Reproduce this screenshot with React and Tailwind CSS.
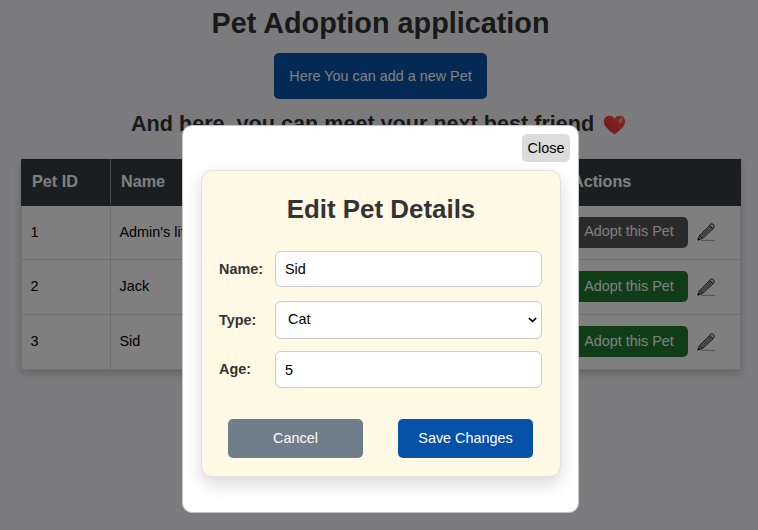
const pets = [
  { id: 1, name: "Admin's little dog", type: "Dog", age: 3, adopted: true },
  { id: 2, name: "Jack", type: "Dog", age: 2, adopted: false },
  { id: 3, name: "Sid", type: "Cat", age: 5, adopted: false },
];

function Heart() {
  return (
    <svg viewBox="0 0 24 21" className="mt-[2px] h-[20px] w-[23px]">
      <defs>
        <linearGradient id="heart" x1="0" y1="0.7" x2="0.8" y2="0.2">
          <stop offset="0" stopColor="#b0124a" />
          <stop offset="0.3" stopColor="#f03a3c" />
          <stop offset="1" stopColor="#ff4a42" />
        </linearGradient>
      </defs>
      <path
        d="M12 20.5C8 17 .8 12.6 .8 6.8 .8 3 3.5 .7 6.6 .7 9 .7 11 1.9 12 3.9 13 1.9 15 .7 17.4 .7 20.5 .7 23.2 3 23.2 6.8 23.2 12.6 16 17 12 20.5Z"
        fill="url(#heart)"
      />
      <ellipse cx="18.5" cy="5.6" rx="1.9" ry="3" transform="rotate(35 18.5 5.6)" fill="#ff9a80" />
    </svg>
  );
}

function Pencil() {
  return (
    <svg viewBox="0 0 18 18" className="h-[18px] w-[18px]" fill="none">
      <path d="M2.2 12.8 12.4 2.6 16 5.8 5.8 15.4Z" fill="#999" stroke="#444" strokeWidth="1" />
      <path d="M4 14.1 14.2 4.2" stroke="#666" strokeWidth="0.8" />
      <path d="M12.4 2.6C13.2 .6 15.2 .3 16.4 1.4 17.6 2.6 17.4 4.7 16 5.8Z" fill="#ccc" stroke="#333" strokeWidth="1" />
      <path d="M2.2 12.8 1 16.8 5.8 15.4Z" fill="#aaa" stroke="#444" strokeWidth="0.9" />
      <path d="M1.5 15.2 .8 17.2 2.8 16.5Z" fill="#000" stroke="#000" strokeWidth="0.8" />
      <path d="M4 17.4H17.5" stroke="#888" strokeWidth="0.8" />
    </svg>
  );
}

function PetTable() {
  const th = "border border-[#343c42] not-first:border-l-[#8b9196] px-[10px] pb-[2px] text-left text-[16.2px] font-bold";
  const td = "border border-[#dedede] px-[8.5px]";
  return (
    <table className="mt-[22px] ml-[21px] h-[211px] w-[720px] table-fixed border-collapse bg-white text-[14.4px] shadow-[0_4px_8px_rgba(0,0,0,0.18)]">
      <colgroup>
        <col className="w-[89px]" />
        <col className="w-[180px]" />
        <col className="w-[140px]" />
        <col className="w-[131px]" />
        <col />
      </colgroup>
      <thead>
        <tr className="h-[46px] bg-[#343c42] text-white">
          <th className={`${th} border-r-[#8b9196]`}>Pet ID</th>
          <th className={th}>Name</th>
          <th className={th}>Type</th>
          <th className={th}>Age</th>
          <th className={th}>Actions</th>
        </tr>
      </thead>
      <tbody>
        {pets.map((pet, i) => (
          <tr key={pet.id} className={i === 0 ? "h-[54px]" : "h-[55px]"}>
            <td className={td}>{pet.id}</td>
            <td className={td}>{pet.name}</td>
            <td className={td}>{pet.type}</td>
            <td className={td}>{pet.age}</td>
            <td className={td}>
              <div className="-mt-px flex items-center gap-[9px]">
                <button
                  className={`h-[31px] w-[117px] rounded-[5px] text-white ${pet.adopted ? "bg-[#555]" : "bg-[#1e7a31]"}`}
                >
                  Adopt this Pet
                </button>
                <Pencil />
              </div>
            </td>
          </tr>
        ))}
      </tbody>
    </table>
  );
}

function EditForm() {
  const label = "w-[56px] pt-px text-[14.4px] font-bold text-[#333]";
  const field = "w-[267px] rounded-[6px] border border-[#ccc] bg-white text-[14.4px] text-black";
  return (
    <form className="mx-[18px] mt-[8px] h-[307px] w-[360px] rounded-[11px] border border-[#e2e2e0] bg-[#fff9e6] px-[17px] pt-[20px] shadow-[0_7px_18px_rgba(0,0,0,0.15)]">
      <h2 className="h-[60px] text-center text-[25.9px] leading-[36px] font-bold text-[#333]">Edit Pet Details</h2>
      <div className="flex h-[36px] items-center">
        <label className={label}>Name:</label>
        <input className={`${field} h-[36px] px-[9px]`} defaultValue="Sid" />
      </div>
      <div className="mt-[14px] flex h-[38px] items-center">
        <label className={label}>Type:</label>
        <div className="relative">
          <select className={`${field} block h-[38px] appearance-none px-[12px]`} defaultValue="Cat">
            <option>Cat</option>
            <option>Dog</option>
          </select>
          <svg viewBox="0 0 9 6" className="pointer-events-none absolute top-[16px] right-[5px] h-[6px] w-[9px]" fill="none">
            <path d="M.9 1.1 4.5 4.4 8.1 1.1" stroke="#000" strokeWidth="1.7" />
          </svg>
        </div>
      </div>
      <div className="mt-[12px] flex h-[37px] items-center">
        <label className={label}>Age:</label>
        <input className={`${field} h-[37px] px-[9px]`} defaultValue="5" />
      </div>
      <div className="mt-[31px] flex w-[323px] justify-between px-[9px] text-[14.4px] text-white">
        <button type="button" className="h-[39px] w-[135px] rounded-[5px] bg-[#707e8b]">Cancel</button>
        <button type="button" className="h-[39px] w-[135px] rounded-[5px] bg-[#0652a8]">Save Changes</button>
      </div>
    </form>
  );
}

export default function App() {
  return (
    <div className="relative h-[530px] w-[758px] overflow-hidden bg-[#f7f7fa] font-['Liberation_Sans',Arial,sans-serif] text-black">
      <main className="flex flex-col">
        <h1 className="mt-[6px] ml-[3px] text-center text-[28.8px] leading-[34px] font-bold text-[#333]">Pet Adoption application</h1>
        <button className="mt-[13px] ml-[274px] h-[46px] w-[213px] rounded-[5px] bg-[#0652a8] pt-px text-[14.4px] text-white">
          Here You can add a new Pet
        </button>
        <div className="mt-[12px] ml-[131px] flex h-[26px] items-center gap-[9px]">
          <h2 className="text-[21.6px] leading-[26px] font-bold whitespace-nowrap text-[#333]">
            And here, you can meet your next best friend
          </h2>
          <Heart />
        </div>
        <PetTable />
      </main>
      <div className="absolute inset-0 bg-black/50 pt-[125px] pl-[182px]">
        <section className="flex h-[388px] w-[397px] flex-col rounded-[10px] border border-[#c4c4c5] bg-white pt-[8px]">
          <button className="mr-[8px] h-[28px] w-[48px] self-end rounded-[5px] bg-[#dcdcdc] pt-px text-[14.4px]">Close</button>
          <EditForm />
        </section>
      </div>
    </div>
  );
}
